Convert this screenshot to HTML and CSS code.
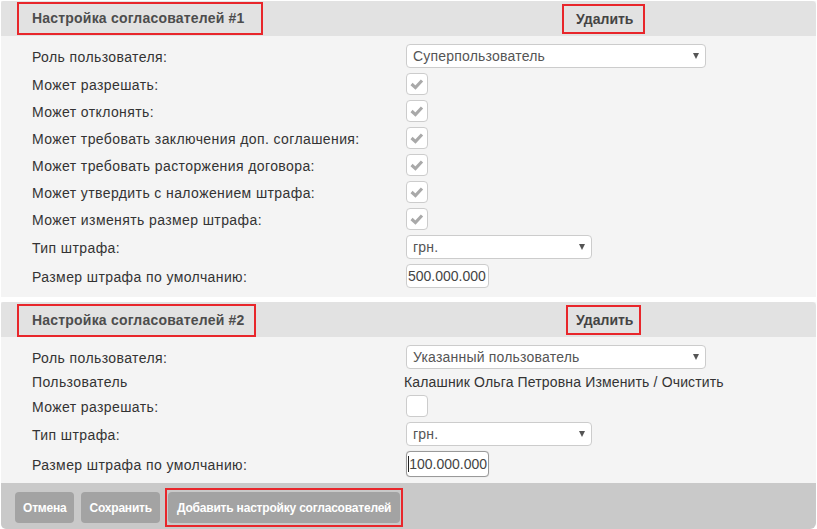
FILE: index.html
```html
<!DOCTYPE html>
<html lang="ru">
<head>
<meta charset="utf-8">
<link rel="stylesheet" href="styles.css">
</head>
<body>
<div class="page">
  <section class="panel">
    <div class="panel-head">
      <span class="title marked">Настройка согласователей #1</span>
      <span class="del marked">Удалить</span>
    </div>
    <div class="panel-body">
      <span class="lbl">Роль пользователя:</span>
      <div class="select wide"><span>Суперпользователь</span><i class="arrow"></i></div>
      <span class="lbl">Может разрешать:</span>
      <div class="check"><svg viewBox="0 0 22 22"><path d="M5 11 L9.3 15 L16.5 7.2"/></svg></div>
      <span class="lbl">Может отклонять:</span>
      <div class="check"><svg viewBox="0 0 22 22"><path d="M5 11 L9.3 15 L16.5 7.2"/></svg></div>
      <span class="lbl">Может требовать заключения доп. соглашения:</span>
      <div class="check"><svg viewBox="0 0 22 22"><path d="M5 11 L9.3 15 L16.5 7.2"/></svg></div>
      <span class="lbl">Может требовать расторжения договора:</span>
      <div class="check"><svg viewBox="0 0 22 22"><path d="M5 11 L9.3 15 L16.5 7.2"/></svg></div>
      <span class="lbl">Может утвердить с наложением штрафа:</span>
      <div class="check"><svg viewBox="0 0 22 22"><path d="M5 11 L9.3 15 L16.5 7.2"/></svg></div>
      <span class="lbl">Может изменять размер штрафа:</span>
      <div class="check"><svg viewBox="0 0 22 22"><path d="M5 11 L9.3 15 L16.5 7.2"/></svg></div>
      <span class="lbl">Тип штрафа:</span>
      <div class="select narrow"><span>грн.</span><i class="arrow"></i></div>
      <span class="lbl">Размер штрафа по умолчанию:</span>
      <div class="num">500.000.000</div>
    </div>
  </section>

  <section class="panel second">
    <div class="panel-head">
      <span class="title marked">Настройка согласователей #2</span>
      <span class="del marked">Удалить</span>
    </div>
    <div class="panel-body">
      <span class="lbl">Роль пользователя:</span>
      <div class="select wide"><span>Указанный пользователь</span><i class="arrow"></i></div>
      <span class="lbl txt">Пользователь</span>
      <span class="val txt">Калашник Ольга Петровна Изменить / Очистить</span>
      <span class="lbl">Может разрешать:</span>
      <div class="check"></div>
      <span class="lbl">Тип штрафа:</span>
      <div class="select narrow"><span>грн.</span><i class="arrow"></i></div>
      <span class="lbl">Размер штрафа по умолчанию:</span>
      <div class="num focus"><i class="caret"></i>100.000.000</div>
    </div>
  </section>

  <div class="footer">
    <button class="btn">Отмена</button>
    <button class="btn">Сохранить</button>
    <span class="btn-mark"><button class="btn">Добавить настройку согласователей</button></span>
  </div>
</div>
</body>
</html>
```

FILE: styles.css
```css
* { box-sizing: border-box; }

html, body {
  margin: 0;
  background: #fff;
}

body {
  font-family: "Liberation Sans", Arial, sans-serif;
  font-size: 14px;
  color: #333;
}

.page {
  width: 815px;
  margin-left: 1px;
  padding-top: 1px;
}

.panel {
  background: #f4f4f4;
}

.panel.second {
  margin-top: 5px;
}

.panel-head {
  height: 35px;
  background: #e2e2e2;
  border-top-right-radius: 4px;
  border-top-left-radius: 2px;
  display: grid;
  grid-template-columns: 545px auto;
  align-items: center;
  padding-left: 16px;
}

.marked {
  border: 2px solid #e8262b;
}

.title {
  justify-self: start;
  height: 33px;
  line-height: 29px;
  padding: 0 16px 0 13px;
  font-weight: bold;
  font-size: 14px;
  color: #4d4d4d;
  letter-spacing: 0.2px;
}

.second .title {
  padding-right: 9px;
  align-self: end;
}

.del {
  justify-self: start;
  height: 30px;
  line-height: 26px;
  padding: 0 10px 0 12px;
  font-weight: bold;
  font-size: 14px;
  color: #444;
}

.second .del {
  margin-left: 4px;
  padding: 0 6px 0 8px;
}

.panel-body {
  display: grid;
  grid-template-columns: 374px 1fr;
  row-gap: 5px;
  align-items: center;
  padding: 8px 0 9px 31px;
}

.second .panel-body {
  padding-top: 8px;
  padding-bottom: 6px;
}

.lbl {
  color: #333;
  line-height: 16px;
  letter-spacing: 0.4px;
  padding-top: 1px;
}

.txt {
  line-height: 15px;
}

.val {
  margin-left: -2px;
  color: #333;
  letter-spacing: 0.15px;
}

.select {
  height: 24px;
  background: #fff;
  border: 1px solid #ccc;
  border-radius: 4px;
  display: flex;
  align-items: center;
  justify-content: space-between;
  padding: 0 6px 0 6px;
  color: #555;
  letter-spacing: 0.2px;
}

.select.wide { width: 300px; }
.select.narrow { width: 186px; }

.arrow {
  width: 0;
  height: 0;
  border-left: 3.5px solid transparent;
  border-right: 3.5px solid transparent;
  border-top: 6px solid #555;
  margin-bottom: 1px;
}

.check {
  width: 22px;
  height: 22px;
  background: #fff;
  border: 1px solid #ccc;
  border-radius: 4px;
  display: flex;
}

.check svg {
  width: 20px;
  height: 20px;
  fill: none;
  stroke: #a9a9a9;
  stroke-width: 3.4;
  stroke-linecap: butt;
  stroke-linejoin: miter;
}

.num {
  width: 83px;
  height: 24px;
  background: #fff;
  border: 1px solid #ccc;
  border-radius: 4px;
  padding: 0 1px;
  line-height: 22px;
  color: #444;
  display: flex;
  align-items: center;
}

.num.focus {
  height: 26px;
  border-color: #999;
  box-shadow: 0 0 1px rgba(0,0,0,0.2);
}

.caret {
  width: 1px;
  height: 16px;
  background: #222;
  margin-right: 1px;
}

.footer {
  height: 46px;
  background: #c9c9c9;
  border-bottom-left-radius: 5px;
  border-bottom-right-radius: 6px;
  display: flex;
  align-items: flex-start;
  gap: 7px;
  padding: 9px 0 0 14px;
}

.btn {
  height: 31px;
  border: none;
  border-radius: 4px;
  background: #a3a3a3;
  color: #fff;
  font-family: "Liberation Sans", Arial, sans-serif;
  font-weight: bold;
  font-size: 12px;
  padding: 0 8px;
  letter-spacing: -0.2px;
}

.btn-mark {
  display: flex;
  margin-top: -4px;
  margin-left: -2px;
  padding: 2px 1px 2px 1px;
  border: 2px solid #e8262b;
}

.btn-mark .btn {
  padding: 0 9px;
}
```
